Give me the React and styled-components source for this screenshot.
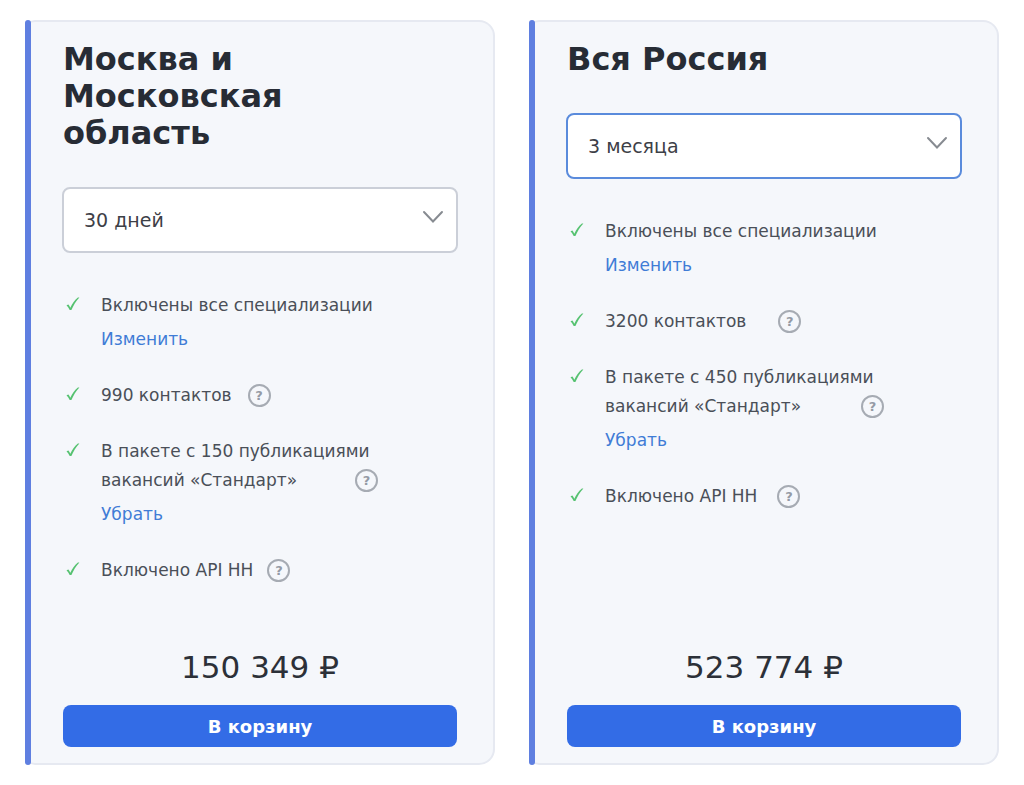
import React, { useState } from "react";
import styled, { createGlobalStyle } from "styled-components";

const GlobalStyle = createGlobalStyle`
  *, *::before, *::after { box-sizing: border-box; }
  body {
    margin: 0;
    background: #ffffff;
    font-family: "DejaVu Sans", sans-serif;
    color: #4a4f58;
  }
`;

const Page = styled.main`
  display: grid;
  grid-template-columns: repeat(auto-fit, minmax(360px, 1fr));
  gap: 34px;
  min-height: 100vh;
  padding: 20px 25px;
`;

const Card = styled.section`
  display: flex;
  background: #f5f7fb;
  border: 2px solid #e6e9f1;
  border-left: 0;
  border-radius: 10px 16px 16px 10px;
`;

const Stripe = styled.div`
  flex: none;
  width: 6px;
  margin: -2px 0;
  border-radius: 3px;
  background: #5f7fe0;
`;

const CardBody = styled.div`
  flex: 1;
  min-width: 0;
  display: flex;
  flex-direction: column;
  padding: 19px 36px 16px 32px;
`;

const Title = styled.h2`
  margin: 0 0 35px;
  max-width: 300px;
  font-size: 32px;
  line-height: 37px;
  font-weight: 700;
  color: #272c35;
`;

const SelectBox = styled.div`
  position: relative;
  margin: 0 -1px 38px;
`;

const PeriodSelect = styled.select`
  display: block;
  width: 100%;
  height: 66px;
  padding: 0 56px 0 20px;
  appearance: none;
  border: 2px solid ${(p) => (p.$active ? "#5a8bdc" : "#cbcfd8")};
  border-radius: 8px;
  background: #ffffff;
  font-family: inherit;
  font-size: 19px;
  color: #3d4047;
`;

const Chevron = styled.svg`
  position: absolute;
  top: 22px;
  right: 14px;
  width: 22px;
  height: 16px;
  pointer-events: none;
`;

const FeatureList = styled.ul`
  display: flex;
  flex-direction: column;
  gap: 27px;
  margin: 0;
  padding: 0;
  list-style: none;
`;

const Feature = styled.li`
  display: flex;
  font-size: 17px;
  line-height: 29px;
`;

const Check = styled.svg`
  flex: none;
  width: 14px;
  height: 16px;
  margin: 6px 21px 0 3px;
`;

const FeatureText = styled.div`
  display: flex;
  flex-direction: column;
  align-items: flex-start;
`;

const Line = styled.div`
  display: flex;
  align-items: center;
  gap: ${(p) => p.$gap || 0}px;
`;

const Hint = styled.button`
  width: 23px;
  height: 23px;
  padding: 0;
  border: 2px solid #a6abb3;
  border-radius: 50%;
  background: transparent;
  font-family: inherit;
  font-size: 13px;
  line-height: 19px;
  font-weight: 700;
  color: #949aa5;
`;

const ActionLink = styled.a`
  margin-top: 5px;
  color: #3f7cd6;
  text-decoration: none;
`;

const Footer = styled.div`
  margin-top: auto;
`;

const Price = styled.p`
  margin: 0 0 19px;
  font-size: 31px;
  line-height: 38px;
  text-align: center;
  color: #2c3038;
`;

const CartButton = styled.button`
  display: block;
  width: 100%;
  height: 42px;
  border: 0;
  border-radius: 8px;
  background: #336ce6;
  font-family: inherit;
  font-size: 18px;
  font-weight: 700;
  color: #ffffff;
`;

const periods = ["30 дней", "3 месяца"];

const plans = [
  {
    id: "moscow",
    title: "Москва и Московская область",
    period: "30 дней",
    price: "150 349 ₽",
    features: [
      { lines: ["Включены все специализации"], action: "Изменить" },
      { lines: ["990 контактов"], hintGap: 16 },
      { lines: ["В пакете с 150 публикациями", "вакансий «Стандарт»"], hintGap: 58, action: "Убрать" },
      { lines: ["Включено API HH"], hintGap: 14 },
    ],
  },
  {
    id: "russia",
    title: "Вся Россия",
    period: "3 месяца",
    active: true,
    price: "523 774 ₽",
    features: [
      { lines: ["Включены все специализации"], action: "Изменить" },
      { lines: ["3200 контактов"], hintGap: 32 },
      { lines: ["В пакете с 450 публикациями", "вакансий «Стандарт»"], hintGap: 60, action: "Убрать" },
      { lines: ["Включено API HH"], hintGap: 20 },
    ],
  },
];

function PlanFeature({ feature }) {
  const last = feature.lines.length - 1;
  return (
    <Feature>
      <Check viewBox="0 0 14 16" aria-hidden="true">
        <path
          d="M0.500 8.300L2.400 7.500C3.200 8.500 3.800 9.500 4.300 10.700C6.200 6.400 8.800 3 11.900 0.400L13.400 0.400C10.100 4 7.400 8.200 5.400 13.100L3.700 13.100C2.900 11.300 1.800 9.700 0.500 8.300Z"
          fill="#56c271"
        />
      </Check>
      <FeatureText>
        {feature.lines.map((line, i) => (
          <Line key={line} $gap={feature.hintGap}>
            <span>{line}</span>
            {i === last && feature.hintGap && (
              <Hint type="button" aria-label={"Подробнее: " + feature.lines.join(" ")}>?</Hint>
            )}
          </Line>
        ))}
        {feature.action && <ActionLink href="#">{feature.action}</ActionLink>}
      </FeatureText>
    </Feature>
  );
}

function PlanCard({ plan }) {
  const [period, setPeriod] = useState(plan.period);
  return (
    <Card aria-labelledby={plan.id + "-title"}>
      <Stripe />
      <CardBody>
        <Title id={plan.id + "-title"}>{plan.title}</Title>
        <SelectBox>
          <PeriodSelect
            aria-labelledby={plan.id + "-title"}
            $active={plan.active}
            value={period}
            onChange={(e) => setPeriod(e.target.value)}
          >
            {periods.map((p) => (
              <option key={p}>{p}</option>
            ))}
          </PeriodSelect>
          <Chevron viewBox="0 0 22 16" fill="none" stroke="#878b91" strokeWidth="2" aria-hidden="true">
            <path d="M2 3L11 12.500L20 3" strokeLinecap="round" />
          </Chevron>
        </SelectBox>
        <FeatureList>
          {plan.features.map((feature) => (
            <PlanFeature key={feature.lines[0]} feature={feature} />
          ))}
        </FeatureList>
        <Footer>
          <Price>{plan.price}</Price>
          <CartButton type="button">В корзину</CartButton>
        </Footer>
      </CardBody>
    </Card>
  );
}

export default function App() {
  return (
    <>
      <GlobalStyle />
      <Page>
        {plans.map((plan) => (
          <PlanCard key={plan.id} plan={plan} />
        ))}
      </Page>
    </>
  );
}
